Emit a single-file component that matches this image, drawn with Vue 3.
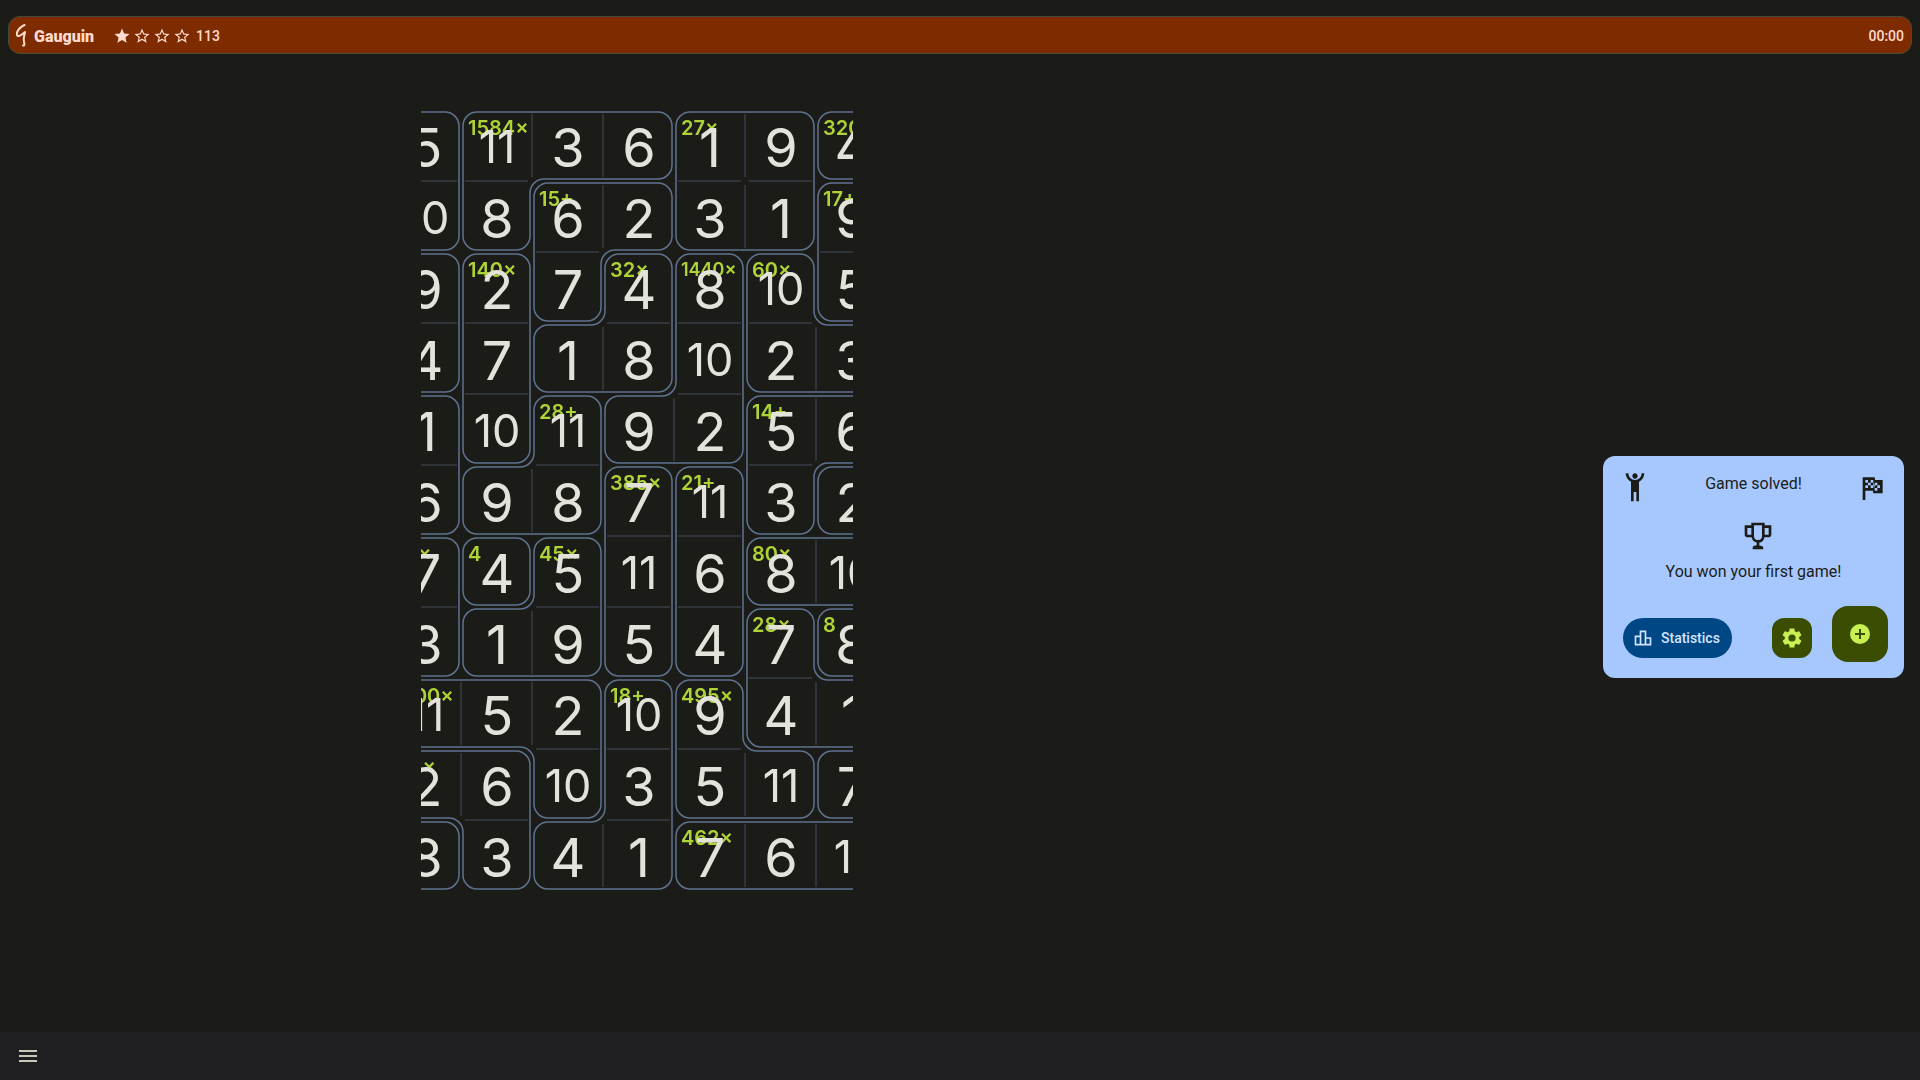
<script setup>
const CELL = 71
const COLS = 7

const values = [
  [5, 11, 3, 6, 1, 9, 4],
  [10, 8, 6, 2, 3, 1, 9],
  [9, 2, 7, 4, 8, 10, 5],
  [4, 7, 1, 8, 10, 2, 3],
  [1, 10, 11, 9, 2, 5, 6],
  [6, 9, 8, 7, 11, 3, 2],
  [7, 4, 5, 11, 6, 8, 10],
  [3, 1, 9, 5, 4, 7, 8],
  [11, 5, 2, 10, 9, 4, 1],
  [2, 6, 10, 3, 5, 11, 7],
  [8, 3, 4, 1, 7, 6, 11],
]

// One letter per cage
const cages = [
  'ABBBCCD',
  'ABEECCF',
  'GHEIJKF',
  'GHIIJKK',
  'LHMJJNN',
  'LMMOPNQ',
  'RSTOPUU',
  'RTTOPVW',
  'XXXYZVV',
  'aaXYZZb',
  'caYYddd',
]

const hints = {
  '0-1': '1584×', '0-4': '27×', '0-6': '320×',
  '1-2': '15+', '1-6': '17+',
  '2-1': '140×', '2-3': '32×', '2-4': '1440×', '2-5': '60×',
  '4-2': '28+', '4-5': '14+',
  '5-3': '385×', '5-4': '21+',
  '6-0': '21×', '6-1': '4', '6-2': '45×', '6-5': '80×',
  '7-5': '28×', '7-6': '8',
  '8-0': '1100×', '8-3': '18+', '8-4': '495×',
  '9-0': '36×',
  '10-4': '462×',
}

const cells = values.flatMap((row, r) =>
  row.map((value, c) => ({
    key: `${r}-${c}`,
    value,
    hint: hints[`${r}-${c}`] || '',
  })),
)

// Outline geometry is in half pixels: one cell is 142 units wide.
const SIZE = CELL * 2
const INSET = 4
const RADIUS = 28
const GAP = 8
const boardWidth = COLS * CELL
const boardHeight = values.length * CELL

const same = (r, c, dr, dc) => {
  const other = cages[r + dr]?.[c + dc]
  return other !== undefined && other === cages[r][c]
}

function buildOutlines() {
  const walls = []
  const dividers = []
  // Reach of a wall from the cell's centre towards one of its ends
  const reach = (r, c, side, along) => {
    const half = SIZE / 2
    if (!same(r, c, ...along)) return half - INSET - RADIUS
    if (same(r, c, side[0] + along[0], side[1] + along[1])) return half + INSET - RADIUS
    return half
  }
  for (let r = 0; r < cages.length; r++) {
    for (let c = 0; c < COLS; c++) {
      const cx = c * SIZE + SIZE / 2
      const cy = r * SIZE + SIZE / 2
      const off = SIZE / 2 - INSET
      for (const s of [-1, 1]) {
        if (!same(r, c, 0, s)) {
          const up = reach(r, c, [0, s], [-1, 0])
          const down = reach(r, c, [0, s], [1, 0])
          walls.push(`M${cx + s * off} ${cy - up}V${cy + down}`)
        }
        if (!same(r, c, s, 0)) {
          const left = reach(r, c, [s, 0], [0, -1])
          const right = reach(r, c, [s, 0], [0, 1])
          walls.push(`M${cx - left} ${cy + s * off}H${cx + right}`)
        }
        for (const t of [-1, 1]) {
          const beside = same(r, c, 0, s)
          const above = same(r, c, t, 0)
          const x = cx + s * off
          const y = cy + t * off
          const sweep = s === t ? 0 : 1
          if (!beside && !above) {
            walls.push(`M${x - s * RADIUS} ${y}A${RADIUS} ${RADIUS} 0 0 ${sweep} ${x} ${y - t * RADIUS}`)
          } else if (beside && above && !same(r, c, t, s)) {
            // Inner corner: joins the walls of the two neighbours
            walls.push(`M${x + s * RADIUS} ${y}A${RADIUS} ${RADIUS} 0 0 ${sweep} ${x} ${y + t * RADIUS}`)
          }
        }
      }
      const right = cx + SIZE / 2
      const bottom = cy + SIZE / 2
      const arm = SIZE / 2 - GAP
      if (same(r, c, 0, 1)) dividers.push(`M${right} ${cy - arm}V${cy + arm}`)
      if (same(r, c, 1, 0)) dividers.push(`M${cx - arm} ${bottom}H${cx + arm}`)
    }
  }
  return { walls: walls.join(''), dividers: dividers.join('') }
}

const { walls, dividers } = buildOutlines()

const STAR_FULL = 'M12 17.27 18.18 21l-1.64-7.03L22 9.24l-7.19-.61L12 2 9.19 8.63 2 9.24l5.46 4.73L5.82 21z'
const STAR_EMPTY = 'M12 15.39 8.24 17.66 9.23 13.38 5.91 10.5 10.29 10.13 12 6.09 13.71 10.13 18.09 10.5 14.77 13.38 15.76 17.66zM22 9.24 14.81 8.63 12 2 9.19 8.63 2 9.24 7.45 13.97 5.82 21 12 17.27 18.18 21 16.54 13.97z'
const stars = [STAR_FULL, STAR_EMPTY, STAR_EMPTY, STAR_EMPTY]
</script>

<template>
  <div class="app">
    <header class="topbar">
      <svg class="logo" width="12" height="24" viewBox="0 0 24 48" aria-hidden="true">
        <path d="M17 2C11 5 5 10 2.5 16C.5 21 2 25 6 24C10 23 14 19 18 16C17 22 15 27 15.5 32C16 37 18 41 16 43H14" />
      </svg>
      <h1 class="title">Gauguin</h1>
      <div class="stars" role="img" aria-label="Difficulty: 1 of 4">
        <svg v-for="(star, i) in stars" :key="i" width="18" height="18" viewBox="0 0 24 24">
          <path :d="star" fill-rule="evenodd" />
        </svg>
      </div>
      <span class="score">113</span>
      <time class="timer">00:00</time>
    </header>

    <main class="content">
      <section class="viewport" aria-label="Puzzle">
        <div class="board">
          <svg class="outlines" :width="boardWidth" :height="boardHeight"
               :viewBox="`0 0 ${boardWidth * 2} ${boardHeight * 2}`" aria-hidden="true">
            <path class="dividers" :d="dividers" />
            <path class="walls" :d="walls" />
          </svg>
          <div v-for="cell in cells" :key="cell.key" class="cell">
            <span v-if="cell.hint" class="hint" :class="{ compact: cell.hint === '1440×' }">{{ cell.hint }}</span>
            <span class="value" :class="{ wide: cell.value > 9 }">{{ cell.value }}</span>
          </div>
        </div>
      </section>

      <section class="card">
        <div class="card-head">
          <svg width="32" height="32" viewBox="0 0 24 24" aria-hidden="true">
            <path d="M5 1C5 3.7 6.56 6.16 9 7.32V22H11V15H13V22H15V7.31C17.44 6.16 19 3.7 19 1H17A5 5 0 0 1 12 6A5 5 0 0 1 7 1M12 1C10.89 1 10 1.89 10 3C10 4.11 10.89 5 12 5C13.11 5 14 4.11 14 3C14 1.89 13.11 1 12 1Z" />
          </svg>
          <h2 class="message">Game solved!</h2>
          <svg width="32" height="32" viewBox="0 0 24 24" aria-hidden="true">
            <path d="M14.4,6H20V16H13L12.6,14H7V21H5V4H14L14.4,6M14,14H16V12H18V10H16V8H14V10L13,8V6H11V8H9V6H7V8H9V10H7V12H9V10H11V12H13V10L14,12V14M11,10V8H13V10H11M14,10H16V12H14V10Z" />
          </svg>
        </div>
        <svg class="trophy" width="32" height="32" viewBox="0 0 24 24" aria-hidden="true">
          <path fill-rule="evenodd" d="M7 2V4H2V11C2 12 3 13 4 13H7.2C7.6 14.9 8.6 16.6 11 16.9V19C8 19.2 8 20.3 8 21.6V22H16V21.7C16 20.4 16 19.3 13 19.1V17C15.5 16.7 16.5 15 16.8 13H20C21 13 22 12 22 11V4H17V2H7M9 4H15V12A3 3 0 0 1 9 12V4M4 6H7V11H4V6M17 6H20V11H17V6Z" />
        </svg>
        <p class="message">You won your first game!</p>
        <div class="actions">
          <button type="button" class="stats">
            <svg width="20" height="20" viewBox="0 0 24 24" aria-hidden="true">
              <path fill-rule="evenodd" d="M16 11V3H8v6H2v12h20V11h-6zm-6-6h4v14h-4V5zm-6 6h4v8H4v-8zm16 8h-4v-6h4v6z" />
            </svg>
            Statistics
          </button>
          <button type="button" class="settings" aria-label="Settings">
            <svg width="24" height="24" viewBox="0 0 24 24" aria-hidden="true">
              <path d="M19.14 12.94c.04-.3.06-.61.06-.94 0-.32-.02-.64-.07-.94l2.03-1.58c.18-.14.23-.41.12-.61l-1.92-3.32c-.12-.22-.37-.29-.59-.22l-2.39.96c-.5-.38-1.03-.7-1.62-.94l-.36-2.54c-.04-.24-.24-.41-.48-.41h-3.84c-.24 0-.43.17-.47.41l-.36 2.54c-.59.24-1.13.57-1.62.94l-2.39-.96c-.22-.08-.47 0-.59.22L2.74 8.87c-.12.21-.08.47.12.61l2.03 1.58c-.05.3-.09.63-.09.94s.02.64.07.94l-2.03 1.58c-.18.14-.23.41-.12.61l1.92 3.32c.12.22.37.29.59.22l2.39-.96c.5.38 1.03.7 1.62.94l.36 2.54c.05.24.24.41.48.41h3.84c.24 0 .44-.17.47-.41l.36-2.54c.59-.24 1.13-.56 1.62-.94l2.39.96c.22.08.47 0 .59-.22l1.92-3.32c.12-.22.07-.47-.12-.61l-2.01-1.58zM12 15.6A3.6 3.6 0 1 1 12 8.4a3.6 3.6 0 0 1 0 7.2z" fill-rule="evenodd" />
            </svg>
          </button>
          <button type="button" class="new-game" aria-label="New game">
            <svg width="24" height="24" viewBox="0 0 24 24" aria-hidden="true">
              <path fill-rule="evenodd" d="M17 13H13V17H11V13H7V11H11V7H13V11H17M12 2A10 10 0 0 0 2 12A10 10 0 0 0 12 22A10 10 0 0 0 22 12A10 10 0 0 0 12 2Z" />
            </svg>
          </button>
        </div>
      </section>
    </main>

    <nav class="bottombar">
      <button type="button" class="menu" aria-label="Menu">
        <svg width="24" height="24" viewBox="0 0 24 24" aria-hidden="true">
          <path d="M3 6H21V8H3V6M3 11H21V13H3V11M3 16H21V18H3V16Z" />
        </svg>
      </button>
    </nav>
  </div>
</template>

<style>
body {
  margin: 0;
  background: #1b1c17;
}
</style>

<style scoped>
.app {
  display: flex;
  flex-direction: column;
  min-height: 100vh;
  background: #1b1c17;
  font-family: Roboto, "Noto Sans", sans-serif;
}

svg {
  display: block;
  flex: none;
  fill: currentColor;
}

button {
  display: flex;
  align-items: center;
  justify-content: center;
  border: 0;
  padding: 0;
  font: inherit;
  cursor: pointer;
}

.topbar {
  display: flex;
  align-items: center;
  box-sizing: border-box;
  height: 38px;
  margin: 16px 8px 0;
  padding: 2px 7px 0;
  border: 1px solid #46483c;
  border-radius: 12px;
  background: #7f2b00;
  color: #ffdbcf;
  font-size: 14px;
  font-weight: 500;
}

.logo path {
  fill: none;
  stroke: currentColor;
  stroke-width: 4;
  stroke-linecap: round;
  stroke-linejoin: round;
}

.title {
  margin: 0 19px 0 6px;
  font-size: 16px;
  font-weight: 900;
}

.stars {
  display: flex;
  gap: 2px;
}

.score {
  margin-left: 5px;
}

.timer {
  margin-left: auto;
}

.content {
  display: grid;
  grid-template-columns: minmax(0, 421fr) minmax(0, 432fr) minmax(0, 750fr) minmax(301px, 301fr);
  flex: 1;
  padding-right: 16px;
}

.viewport {
  grid-column: 2;
  align-self: start;
  margin-top: 56px;
  overflow: hidden;
}

.board {
  position: relative;
  display: grid;
  grid-template-columns: repeat(7, 71px);
  grid-auto-rows: 71px;
  margin-left: -31px;
  font-family: Inter, "Noto Sans", sans-serif;
  font-optical-sizing: none;
  will-change: transform;
}

.outlines {
  position: absolute;
  top: 0;
  left: 0;
}

.outlines path {
  fill: none;
}

.walls {
  stroke: #5f7290;
  stroke-width: 3;
}

.dividers {
  stroke: #2e3439;
  stroke-width: 4;
}

.cell {
  position: relative;
  text-align: center;
}

.hint {
  position: absolute;
  top: 6px;
  left: 7px;
  color: #aed337;
  font-size: 20px;
  font-weight: 600;
  line-height: 24px;
}

.hint.compact {
  font-size: 18px;
}

.value {
  position: relative;
  display: block;
  padding-left: 1px;
  color: #e4e3db;
  font-size: 54px;
  line-height: 75px;
}

.value.wide {
  font-size: 45px;
  line-height: 73px;
}

.card {
  grid-column: 4;
  align-self: center;
  display: flex;
  flex-direction: column;
  align-items: center;
  box-sizing: border-box;
  margin-top: 48px;
  padding: 16px;
  border-radius: 12px;
  background: #a6c8ff;
  color: #1b1c17;
}

.card-head {
  display: flex;
  justify-content: space-between;
  align-self: stretch;
}

.message {
  margin: 0;
  font-size: 16px;
  font-weight: 400;
  line-height: 24px;
}

.trophy {
  margin: 16px 0 8px 8px;
}

.actions {
  display: flex;
  align-items: flex-end;
  align-self: stretch;
  margin-top: 22px;
}

.stats {
  gap: 8px;
  height: 40px;
  margin: 0 auto 4px 4px;
  padding: 0 12px 0 10px;
  border-radius: 20px;
  background: #004786;
  color: #d5e3ff;
  font-size: 14px;
  font-weight: 500;
}

.settings {
  width: 40px;
  height: 40px;
  margin: 0 20px 4px 0;
  border-radius: 12px;
  background: #3b4d00;
  color: #c9f051;
}

.new-game {
  width: 56px;
  height: 56px;
  border-radius: 16px;
  background: #3b4d00;
  color: #c9f051;
}

.bottombar {
  display: flex;
  align-items: center;
  height: 48px;
  padding: 0 16px;
  background: #202023;
}

.menu {
  background: none;
  color: #c7c8b7;
}
</style>
